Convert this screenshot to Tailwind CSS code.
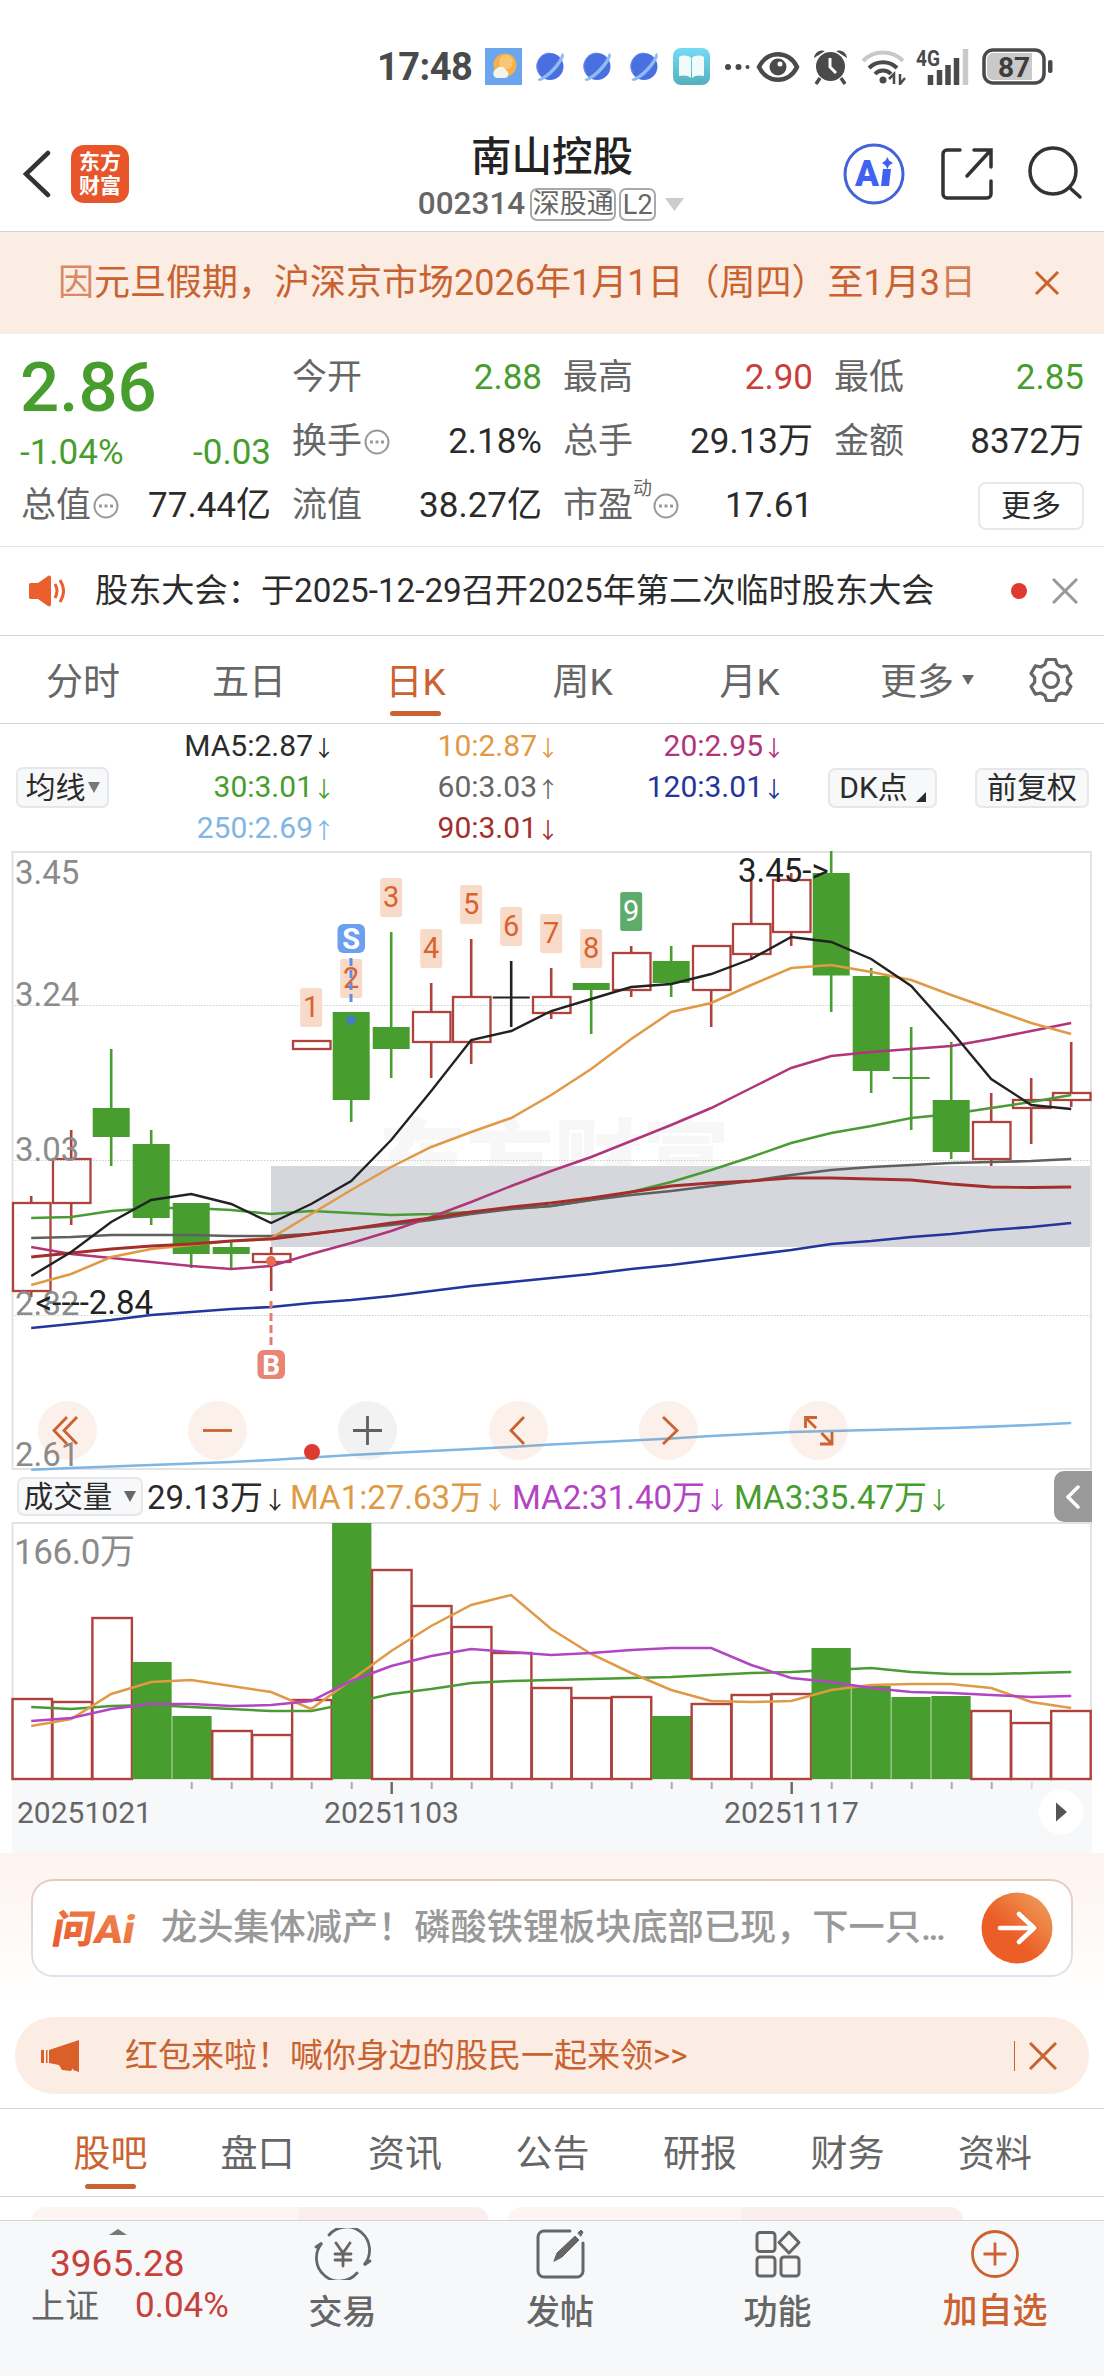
<!DOCTYPE html>
<html lang="zh-CN">
<head>
    <meta charset="UTF-8">
    <meta name="viewport" content="width=device-width, initial-scale=1.0">
    <title>南山控股 002314</title>
    <script src="https://cdn.jsdelivr.net/npm/@tailwindcss/browser@4"></script>
</head>
<body class="w-[1104px] h-[2376px] overflow-hidden bg-white text-[#2b2b2b] font-[Roboto,'Noto_Sans_CJK_SC',sans-serif]">

    <!-- Status bar -->
    <div class="flex items-center h-[116px] pt-[17px] pl-[377px] text-[#4a4a4a]">
        <span class="w-[108px] text-[38px] font-bold leading-[48px] tracking-[-0.5px]">17:48</span>
        <svg class="w-[37px] h-[37px]" viewBox="0 0 37 37">
            <rect width="37" height="37" fill="#6aa5ee"/>
            <circle cx="20" cy="17" r="11.5" fill="#f6b04a"/>
            <circle cx="21" cy="14" r="7" fill="#fbd08a" opacity=".7"/>
            <path d="M11 30a5 5 0 0 1 0-9 6 6 0 0 1 10 1 4.500 4.500 0 0 1 0 8z" fill="#f4f3ee"/>
        </svg>
        <svg class="ml-[13px] w-[124px] h-[37px]" viewBox="0 0 124 37">
            <g id="planet">
                <circle cx="15" cy="18.500" r="13.500" fill="#4a6fe0"/>
                <path d="M3 31C12 27 24 15 27 5c3 1 2 4 0 8C22 22 12 31 5 33c-2 0-3-1-2-2z" fill="#8cbcf3"/>
                <path d="M4 25A13 13 0 0 1 15 5" stroke="#6f92ee" stroke-width="1" fill="none"/>
            </g>
            <use href="#planet" x="47"/>
            <use href="#planet" x="94"/>
        </svg>
        <svg class="ml-[14px] w-[37px] h-[37px]" viewBox="0 0 37 37">
            <defs><linearGradient id="book" x1="0" y1="0" x2="0" y2="1"><stop offset="0" stop-color="#74dbf5"/><stop offset="1" stop-color="#55b0bd"/></linearGradient></defs>
            <rect width="37" height="37" rx="8" fill="url(#book)"/>
            <path d="M6 9c4-2 9-2 12 1v20c-3-3-8-3-12-2zM31 9c-4-2-9-2-12 1v20c3-3 8-3 12-2z" fill="#f2fbfc"/>
        </svg>
        <svg class="ml-[14px] w-[28px] h-[10px]" viewBox="0 0 28 10" fill="#4a4a4a">
            <circle cx="4" cy="5" r="3"/><circle cx="14.500" cy="5" r="3"/><circle cx="23.500" cy="5" r="2"/>
        </svg>
        <svg class="ml-[4px] w-[44px] h-[34px]" viewBox="0 0 44 34" fill="none">
            <path d="M3 17C11 0 33 0 41 17 33 34 11 34 3 17z" stroke="#4a4a4a" stroke-width="4.500"/>
            <circle cx="22" cy="17" r="8.500" fill="#4a4a4a"/><circle cx="24" cy="14" r="2.500" fill="#fff"/>
        </svg>
        <svg class="ml-[12px] w-[37px] h-[37px]" viewBox="0 0 37 37">
            <path d="M2 10a8 8 0 0 1 11-7zM35 10a8 8 0 0 0-11-7z" fill="#4a4a4a"/>
            <circle cx="18.500" cy="18.500" r="14.500" fill="#4a4a4a"/>
            <path d="M8 30l-4 6M29 30l4 6" stroke="#4a4a4a" stroke-width="3.500"/>
            <path d="M18 10v9l6 6" stroke="#fff" stroke-width="3" fill="none"/>
        </svg>
        <svg class="ml-[12px] w-[46px] h-[37px]" viewBox="0 0 46 37" fill="none" stroke-width="4">
            <path d="M2 13a28 28 0 0 1 40 0" stroke="#c9c9c9"/>
            <path d="M8 20a20 20 0 0 1 28 0" stroke="#4a4a4a"/>
            <path d="M14 26a11 11 0 0 1 16 0" stroke="#4a4a4a"/>
            <circle cx="22" cy="32" r="3.500" fill="#4a4a4a"/>
            <path d="M33 36V26l-5 5M39 26v10l5-6" stroke="#4a4a4a" stroke-width="2.500"/>
        </svg>
        <svg class="ml-[8px] w-[56px] h-[38px]" viewBox="0 0 56 38">
            <text x="1" y="18" font-size="22" font-weight="700" textLength="24" lengthAdjust="spacingAndGlyphs" fill="#4a4a4a">4G</text>
            <g stroke="#4a4a4a" stroke-width="5.500">
                <path d="M15.500 27v10M24.500 22v15M33 17v20M41.500 10v27"/><path d="M50.500 1v36" stroke="#c9c9c9"/>
            </g>
        </svg>
        <svg class="ml-[11px] w-[74px] h-[38px]" viewBox="0 0 74 38">
            <rect x="2" y="2" width="60" height="33" rx="9" fill="none" stroke="#4a4a4a" stroke-width="3.500"/>
            <path d="M11 5h39v27H11a6 6 0 0 1-6-6V11a6 6 0 0 1 6-6z" fill="#c9c9c9"/>
            <rect x="66" y="12" width="4.500" height="13" rx="2" fill="#4a4a4a"/>
            <text x="32" y="28.500" font-size="28" font-weight="700" text-anchor="middle" fill="#3d3d3d">87</text>
        </svg>
    </div>

    <!-- Title bar -->
    <header class="grid grid-cols-[380px_1fr_380px] h-[116px] border-b border-[#d2d2d4]">
        <div class="flex items-center pl-[22px]">
            <svg class="w-[30px] h-[48px]" viewBox="0 0 30 48" fill="none" stroke="#333" stroke-width="4.500" stroke-linecap="round"><path d="M26 3L4 24l22 21"/></svg>
            <div class="ml-[19px] w-[58px] h-[58px] rounded-[13px] bg-[#e8552b] text-white font-bold text-[21px] leading-[24px] text-center pt-[5px]">东方<br>财富</div>
        </div>
        <div class="flex flex-col items-center pt-[17px]">
            <h1 class="text-[40.500px] leading-[48px] font-medium text-[#222]">南山控股</h1>
            <div class="flex items-center h-[46px] text-[#666] leading-none -ml-[2px]">
                <span class="text-[31.500px] font-medium mr-[5px]">002314</span>
                <span class="border-2 border-[#a9a9a9] rounded-[7px] h-[33px] w-[86px] text-center text-[27px] leading-[28px] mr-[3px] whitespace-nowrap">深股通</span>
                <span class="border-2 border-[#a9a9a9] rounded-[7px] h-[33px] w-[37px] text-center text-[27px] leading-[30px]">L2</span>
                <svg class="ml-[9px] w-[19px] h-[13px]" viewBox="0 0 19 13"><path d="M0 0h19L9.500 13z" fill="#ccc"/></svg>
            </div>
        </div>
        <div class="flex items-center pl-[118px]">
            <svg class="w-[64px] h-[64px]" viewBox="0 0 64 64">
                <circle cx="32" cy="32" r="29" fill="none" stroke="#4363d8" stroke-width="3"/>
                <text x="13" y="44" font-size="36" font-weight="900" textLength="24" lengthAdjust="spacingAndGlyphs" fill="#4161f0">A</text>
                <path d="M41 27h8l-2 17h-8z" fill="#4161f0"/>
                <path d="M45.500 15l1.500 3.500 4 2.500-4 2.500-1.500 3.500-2-3.500-3.500-2.500 3.500-2.500z" fill="#4161f0"/>
            </svg>
            <svg class="ml-[34px] w-[54px] h-[54px]" viewBox="0 0 54 54" fill="none" stroke="#333" stroke-width="3.500" stroke-linecap="round">
                <path d="M20 3H7a4 4 0 0 0-4 4v40a4 4 0 0 0 4 4h40a4 4 0 0 0 4-4V34M34 3h17v17M50 4L27 29"/>
            </svg>
            <svg class="ml-[33px] w-[56px] h-[56px]" viewBox="0 0 56 56" fill="none" stroke="#333" stroke-width="3.500" stroke-linecap="round">
                <circle cx="26" cy="25" r="23"/><path d="M43 42l10 9"/>
            </svg>
        </div>
    </header>

    <!-- Holiday notice -->
    <div class="flex items-center h-[102px] bg-[#fbece4] pl-[58px] text-[#c8622f]">
        <p class="w-[924px] text-[36px] leading-[52px] whitespace-nowrap"><span class="opacity-70">因</span>元旦假期，沪深京市场2026年1月1日（周四）至1月3<span class="opacity-80">日</span></p>
        <svg class="ml-[52px] w-[26px] h-[26px]" viewBox="0 0 26 26" stroke="#c8622f" stroke-width="3"><path d="M2 2l22 22M24 2L2 24"/></svg>
    </div>

    <!-- Quote -->
    <section class="grid grid-cols-[250px_250px_250px_250px] gap-x-[21px] h-[213px] pt-[12px] pl-[21px] border-b border-[#e4e4e6] text-[35px] leading-[64px] whitespace-nowrap">
        <div class="h-[192px]">
            <div class="h-[84px] text-[69px] leading-[84px] font-medium text-[#479d2d] -ml-px">2.86</div>
            <div class="flex justify-between h-[44px] leading-[44px] mt-[1px] text-[#479d2d] -ml-px"><span>-1.04%</span><span>-0.03</span></div>
            <div class="flex items-center h-[64px] -mt-[1px]"><span class="text-[#666]">总值</span><svg class="ml-[2px] w-[26px] h-[26px]" viewBox="0 0 26 26"><g id="more-dots"><circle cx="13" cy="13" r="11.500" fill="none" stroke="#999" stroke-width="2"/><path d="M6 13h3M11.500 13h3M17 13h3" stroke="#999" stroke-width="3"/></g></svg><span class="ml-auto">77.44亿</span></div>
        </div>
        <div>
            <div class="flex justify-between"><span class="text-[#666]">今开</span><span class="text-[#479d2d]">2.88</span></div>
            <div class="flex items-center"><span class="text-[#666]">换手</span><svg class="ml-[2px] w-[26px] h-[26px]" viewBox="0 0 26 26"><use href="#more-dots"/></svg><span class="ml-auto">2.18%</span></div>
            <div class="flex justify-between"><span class="text-[#666]">流值</span><span>38.27亿</span></div>
        </div>
        <div>
            <div class="flex justify-between"><span class="text-[#666]">最高</span><span class="text-[#c8403a]">2.90</span></div>
            <div class="flex justify-between"><span class="text-[#666]">总手</span><span>29.13万</span></div>
            <div class="flex items-center"><span class="text-[#666]">市盈</span><span class="text-[#666] text-[19px] leading-none -mt-[36px]">动</span><svg class="ml-[1px] w-[26px] h-[26px]" viewBox="0 0 26 26"><use href="#more-dots"/></svg><span class="ml-auto">17.61</span></div>
        </div>
        <div>
            <div class="flex justify-between"><span class="text-[#666]">最低</span><span class="text-[#479d2d]">2.85</span></div>
            <div class="flex justify-between"><span class="text-[#666]">金额</span><span>8372万</span></div>
            <div class="flex justify-end items-center h-[64px]"><span class="w-[106px] h-[48px] border-2 border-[#e8e8ea] rounded-[8px] text-center text-[30px] leading-[43px] -mt-px">更多</span></div>
        </div>
    </section>

    <!-- Announcement -->
    <div class="flex items-center h-[89px] border-b border-[#d2d2d4] pl-[28px]">
        <svg class="w-[40px] h-[34px]" viewBox="0 0 40 34"><path d="M3 9h7L20 2c2-1 3 0 3 2v26c0 2-1 3-3 2l-10-7H3c-2 0-2-1-2-2V11c0-1 0-2 2-2z" fill="#ea5f2d"/><path d="M27 10q4 7 0 14M32 6q7 11 0 22" fill="none" stroke="#ea5f2d" stroke-width="3"/></svg>
        <p class="ml-[27px] w-[916px] text-[33.200px] leading-[48px] whitespace-nowrap">股东大会：于2025-12-29召开2025年第二次临时股东大会</p>
        <span class="w-[16px] h-[16px] rounded-full bg-[#de3a31]"></span>
        <svg class="ml-[25px] w-[26px] h-[26px]" viewBox="0 0 26 26" stroke="#999" stroke-width="3"><path d="M1 1l24 24M25 1L1 25"/></svg>
    </div>

    <!-- Period tabs -->
    <nav class="flex h-[88px] border-b border-[#d2d2d4] text-[37px] leading-[93px] text-[#666] text-center">
        <span class="w-[166px]">分时</span>
        <span class="w-[166px]">五日</span>
        <span class="w-[167px] flex flex-col items-center text-[#cb6230]">日K<i class="w-[51px] h-[5px] rounded-full bg-[#cb6230] -mt-[18px]"></i></span>
        <span class="w-[167px]">周K</span>
        <span class="w-[167px]">月K</span>
        <span class="w-[188px] flex h-[93px] items-center justify-center gap-[8px]">更多<svg class="w-[12px] h-[10px] -mt-[6px]" viewBox="0 0 13 11"><path d="M0 0h13L6.500 11z" fill="#666"/></svg></span>
        <svg class="mt-[21px] ml-[7px] w-[46px] h-[46px]" viewBox="0 0 46 46" fill="none" stroke="#666" stroke-width="3.200" stroke-linejoin="round">
            <path d="M18.600 2.500H27.400L29.200 7.700 33.200 10 38.600 8.900 43 16.500 39.300 20.700V25.300L43 29.500 38.600 37.100 33.200 36 29.200 38.300 27.400 43.500H18.600L16.800 38.300 12.800 36 7.400 37.100 3 29.500 6.700 25.300V20.700L3 16.500 7.400 8.900 12.800 10 16.800 7.700Z"/><circle cx="23" cy="23" r="7.500"/>
        </svg>
    </nav>

    <!-- Moving averages -->
    <div class="flex items-center h-[127px] pl-[16px] text-[30px]">
        <div class="flex items-center justify-center gap-[2px] w-[93px] h-[41px] bg-[#f7f8fa] border-2 border-[#e6e7ea] rounded-[7px] leading-[36px]">均线<svg class="w-[12px] h-[11px]" viewBox="0 0 12 11"><path d="M0 0h12L6 11z" fill="#777"/></svg></div>
        <div class="grid grid-cols-[221px_224px_226px] grid-rows-[41px_41px_41px] leading-[41px] h-[123px] -mt-[3px] text-right">
            <span>MA5:2.87<i class="not-italic inline-block w-[17px] text-center text-[22px] leading-none">↓</i></span>
            <span class="text-[#e09a45]">10:2.87<i class="not-italic inline-block w-[17px] text-center text-[22px] leading-none">↓</i></span>
            <span class="text-[#b0357a]">20:2.95<i class="not-italic inline-block w-[17px] text-center text-[22px] leading-none">↓</i></span>
            <span class="text-[#479d2d]">30:3.01<i class="not-italic inline-block w-[17px] text-center text-[22px] leading-none">↓</i></span>
            <span class="text-[#666]">60:3.03<i class="not-italic inline-block w-[17px] text-center text-[22px] leading-none">↑</i></span>
            <span class="text-[#22369b]">120:3.01<i class="not-italic inline-block w-[17px] text-center text-[22px] leading-none">↓</i></span>
            <span class="text-[#7fb6e4]">250:2.69<i class="not-italic inline-block w-[17px] text-center text-[22px] leading-none">↑</i></span>
            <span class="text-[#a32f2c]">90:3.01<i class="not-italic inline-block w-[17px] text-center text-[22px] leading-none">↓</i></span>
        </div>
        <div class="flex items-end justify-center gap-[8px] ml-[48px] w-[109px] h-[40px] bg-[#f7f8fa] border-2 border-[#e6e7ea] rounded-[7px] leading-[36px]">DK点<svg class="w-[10px] h-[10px] mb-[4px]" viewBox="0 0 10 10"><path d="M10 0v10H0z" fill="#2b2b2b"/></svg></div>
        <div class="ml-[38px] w-[114px] h-[40px] bg-[#f7f8fa] border-2 border-[#e6e7ea] rounded-[7px] leading-[35px] text-center">前复权</div>
    </div>

    <!-- K-line chart -->
    <svg id="kline" class="block w-[1104px] h-[620px]" viewBox="0 851 1104 620" fill="none"></svg>

    <!-- Volume header -->
    <div class="flex items-center h-[51px] pl-[17px] text-[33px] leading-[48px] whitespace-nowrap">
        <div class="flex items-center justify-center gap-[12px] w-[126px] h-[39px] mr-[4px] bg-[#f7f8fa] border-2 border-[#e6e7ea] rounded-[7px] text-[29.500px] leading-[34px]">成交量<svg class="w-[12px] h-[11px]" viewBox="0 0 12 11"><path d="M0 0h12L6 11z" fill="#666"/></svg></div>
        <div class="flex pt-[3px]">
            <span class="w-[143px]">29.13万<i class="not-italic inline-block w-[18px] text-center text-[24px] leading-none">↓</i></span>
            <span class="w-[222px] text-[#e09a45]">MA1:27.63万<i class="not-italic inline-block w-[18px] text-center text-[24px] leading-none">↓</i></span>
            <span class="w-[222px] text-[#b345c4]">MA2:31.40万<i class="not-italic inline-block w-[18px] text-center text-[24px] leading-none">↓</i></span>
            <span class="text-[#479d2d]">MA3:35.47万<i class="not-italic inline-block w-[18px] text-center text-[24px] leading-none">↓</i></span>
        </div>
        <div class="ml-auto mr-[12px] w-[38px] h-[51px] bg-[#999] rounded-l-[10px] flex items-center justify-center"><svg class="w-[14px] h-[24px]" viewBox="0 0 14 24" fill="none" stroke="#fff" stroke-width="3.500" stroke-linecap="round"><path d="M12 2L2 12l10 10"/></svg></div>
    </div>

    <!-- Volume chart with date axis -->
    <svg id="volume" class="block w-[1104px] h-[331px]" viewBox="0 1522 1104 331" fill="none"></svg>

    <!-- AI question -->
    <div class="h-[150px] pt-[26px] px-[31px] bg-linear-to-b from-[#fdf3ef] to-white">
        <div class="h-[98px] p-[2px] rounded-[22px] bg-linear-to-b from-[#e8c9c1] to-[#dfe2ef]">
            <div class="flex items-center h-full rounded-[20px] bg-white pl-[15px]">
                <svg class="w-[88px] h-[44px]" viewBox="0 0 88 44">
                    <defs><linearGradient id="ask" x1="0" y1="1" x2="1" y2="0"><stop offset="0" stop-color="#e9532a"/><stop offset="1" stop-color="#f08d52"/></linearGradient></defs>
                    <text x="9" y="37" font-size="39" font-weight="900" textLength="82" lengthAdjust="spacingAndGlyphs" transform="skewX(-10)" fill="url(#ask)">问Ai</text>
                </svg>
                <p class="ml-[25px] w-[820px] text-[36.200px] leading-[56px] whitespace-nowrap text-[#999] font-medium">龙头集体减产！磷酸铁锂板块底部已现，下一只<span class="tracking-[-2.500px]">...</span></p>
                <svg class="w-[72px] h-[72px]" viewBox="0 0 72 72">
                    <defs><linearGradient id="go" x1=".2" y1=".8" x2=".9" y2=".1"><stop offset=".3" stop-color="#ec5e28"/><stop offset="1" stop-color="#ee9a55"/></linearGradient></defs>
                    <circle cx="36" cy="36" r="35.500" fill="url(#go)"/>
                    <path d="M19 36h34M38 22l15 14-15 14" fill="none" stroke="#fff" stroke-width="4.500" stroke-linecap="round" stroke-linejoin="round"/>
                </svg>
            </div>
        </div>
    </div>

    <!-- Red packet banner -->
    <div class="h-[106px] pt-[14px] px-[15px] border-b border-[#d2d2d4]">
        <div class="flex items-center h-[77px] rounded-full bg-[#fbece4] pl-[26px] text-[#c8622f]">
            <svg class="w-[40px] h-[34px]" viewBox="0 0 40 34" fill="#da5f28"><path d="M0 11h3v13H0zM5 11h1.500v13H5zM8 11L38 1v32l-6-2v-2l-2 3-9-1-3-5-10-2z"/></svg>
            <p class="ml-[44px] w-[889px] text-[33px] leading-[48px] whitespace-nowrap">红包来啦！喊你身边的股民一起来领&gt;&gt;</p>
            <i class="w-[1px] h-[30px] bg-[#c8622f]"></i>
            <svg class="ml-[14px] w-[28px] h-[28px]" viewBox="0 0 28 28" stroke="#c8622f" stroke-width="3"><path d="M1 1l26 26M27 1L1 27"/></svg>
        </div>
    </div>

    <!-- Content tabs -->
    <nav class="flex h-[88px] pl-[37px] border-b border-[#d2d2d4] text-[37px] leading-[92px] text-[#666] text-center">
        <span class="w-[147px] flex flex-col items-center text-[#cb6230]">股吧<i class="w-[51px] h-[5px] rounded-full bg-[#cb6230] -mt-[17px]"></i></span>
        <span class="w-[147px]">盘口</span>
        <span class="w-[148px]">资讯</span>
        <span class="w-[147px]">公告</span>
        <span class="w-[148px]">研报</span>
        <span class="w-[147px]">财务</span>
        <span class="w-[148px]">资料</span>
    </nav>

    <div class="flex gap-[20px] h-[23px] pt-[10px] pl-[32px]">
        <div class="w-[456px] h-[13px] rounded-t-[20px] overflow-hidden flex bg-[#fdf5f3]"><div class="ml-auto w-[190px] bg-[#faefed]"></div></div>
        <div class="w-[455px] h-[13px] rounded-t-[20px] overflow-hidden flex bg-[#fdf5f3]"><div class="ml-auto w-[221px] bg-[#faefed]"></div></div>
    </div>

    <!-- Bottom bar -->
    <footer class="flex h-[156px] bg-[#f7f8fa] border-t border-[#d2d3d6] text-[34px] font-medium text-[#666]">
        <div class="w-[234px] font-normal">
            <svg class="ml-[109px] mt-[8px] w-[18px] h-[6px]" viewBox="0 0 18 6"><path d="M9 0l9 6H0z" fill="#777"/></svg>
            <div class="pl-[50px] mt-[7px] text-[37px] leading-[44px] text-[#c8403a]">3965.28</div>
            <div class="flex pl-[31px] leading-[40px]"><span class="w-[104px]">上证</span><span class="text-[35px] text-[#c8403a]">0.04%</span></div>
        </div>
        <div class="w-[217px] flex flex-col items-center pt-[7px]">
            <svg class="w-[60px] h-[52px]" viewBox="0 0 60 52" fill="none" stroke="#666" stroke-width="2.800" stroke-linecap="round">
                <path d="M16 7A23 23 0 0 1 51 37l6-4M44 45A23 23 0 0 1 9 15l-6 4M23 15l7 10 7-10M30 25v13M22 26h16M22 32h16"/>
            </svg>
            <span class="leading-[50px] mt-[7px]">交易</span>
        </div>
        <div class="w-[218px] flex flex-col items-center pt-[7px]">
            <svg class="w-[52px] h-[52px]" viewBox="0 0 52 52" fill="none" stroke="#666" stroke-width="3" stroke-linecap="round">
                <path d="M36 3H10a6 6 0 0 0-6 6v34a6 6 0 0 0 6 6h33a6 6 0 0 0 6-6V15"/><path d="M20 33l3-8L41 8l4 4-17 17zM44 5l3-3 2 2-2 4z" fill="#666" stroke-width="1"/>
            </svg>
            <span class="leading-[50px] mt-[7px]">发帖</span>
        </div>
        <div class="w-[217px] flex flex-col items-center pt-[7px]">
            <svg class="w-[52px] h-[52px]" viewBox="0 0 52 52" fill="none" stroke="#666" stroke-width="3" stroke-linejoin="round">
                <rect x="5" y="4.500" width="18" height="19" rx="3"/><rect x="5" y="29" width="18" height="19" rx="3"/><rect x="29" y="29" width="18" height="19" rx="3"/><path d="M37 4l10 10.500L37 25 27 14.500z"/>
            </svg>
            <span class="leading-[50px] mt-[7px]">功能</span>
        </div>
        <div class="w-[218px] flex flex-col items-center pt-[7px] text-[#cb6230]">
            <svg class="w-[52px] h-[52px]" viewBox="0 0 52 52" fill="none" stroke="#cb6230" stroke-width="2.800"><circle cx="26" cy="26" r="22.500"/><path d="M26 14.500v23M14.500 26h23"/></svg>
            <span class="text-[35px] leading-[50px] mt-[7px]">加自选</span>
        </div>
    </footer>

    <script>
        const GREEN = '#479d2d';
        const RED = '#ae423c';
        const cx = i => 31.2 + 40 * i;

        function polyline(values, color, width) {
            const pts = values.map((v, i) => `${cx(i)},${v}`).join(' ');
            return `<polyline points="${pts}" stroke="${color}" stroke-width="${width}"/>`;
        }

        // [type, body top, body bottom, high, low]
        const candles = [
            ['r', 1203, 1291, 1196, 1297], ['r', 1159, 1203, 1130, 1225], ['g', 1108, 1137, 1049, 1166],
            ['g', 1144, 1218, 1130, 1225], ['g', 1203, 1254, 1203, 1268], ['g', 1247, 1254, 1242, 1268],
            ['r', 1254, 1262, 1247, 1291], ['r', 1041, 1049, 1041, 1049], ['g', 1012, 1100, 1012, 1122],
            ['g', 1027, 1049, 932, 1078], ['r', 1012, 1042, 983, 1078], ['r', 997, 1042, 939, 1064],
            ['k', 996.5, 998.5, 961, 1027], ['r', 997, 1013, 968, 1019], ['g', 983, 990, 983, 1034],
            ['r', 953, 990, 946, 997], ['g', 961, 983, 946, 997], ['r', 946, 990, 946, 1027],
            ['r', 924, 954, 880, 960], ['r', 880, 932, 873, 946], ['g', 873, 975.5, 851, 1012],
            ['g', 976, 1071, 968, 1093], ['g', 1077, 1079, 1027, 1130], ['g', 1100, 1152, 1042, 1159],
            ['r', 1122, 1159, 1093, 1166], ['r', 1100, 1108, 1078, 1144], ['r', 1093, 1100, 1042, 1107]
        ];

        const ma = {
            250: [1469.7, 1468, 1466.5, 1465, 1463.5, 1462, 1460, 1457.5, 1455, 1453, 1451, 1449, 1447, 1444.5, 1442.5, 1440.5, 1438.5, 1436, 1434, 1432, 1431, 1430, 1429, 1428, 1426.6, 1425, 1423],
            120: [1328, 1324, 1320, 1315, 1312, 1309, 1307, 1303, 1300, 1296, 1291, 1286, 1282, 1278, 1274, 1269, 1265, 1260, 1255, 1250, 1244, 1241, 1237, 1234, 1230, 1227, 1223],
            30: [1218, 1217, 1211, 1208, 1208, 1210, 1214, 1211, 1213, 1215, 1214, 1212, 1209, 1206, 1200, 1192, 1182, 1170, 1157, 1143, 1133, 1126, 1118, 1114, 1108, 1102, 1095],
            60: [1238, 1237, 1235, 1235, 1235, 1236, 1236, 1234, 1229, 1225, 1220, 1214, 1209, 1206, 1200, 1195, 1191, 1186, 1181, 1175, 1170, 1167, 1165, 1163, 1162, 1161, 1159],
            20: [1247, 1254, 1258, 1262, 1266, 1269, 1266, 1254, 1243, 1231, 1217, 1202, 1186, 1171, 1157, 1141, 1125, 1108, 1088, 1068, 1056, 1052, 1049, 1046, 1039, 1031, 1023],
            10: [1285, 1274, 1257, 1249, 1245, 1241, 1238, 1214, 1190, 1167, 1147, 1132, 1118, 1095, 1069, 1039, 1012, 1003, 985, 968, 965, 972, 980, 995, 1009, 1023, 1034],
            90: [1257, 1253, 1249, 1246, 1244, 1241, 1239, 1234, 1229, 1223, 1218, 1212, 1207, 1203, 1198, 1192, 1186, 1183, 1181, 1178, 1178, 1179, 1180, 1184, 1187, 1187.5, 1187],
            5: [1276, 1252, 1222, 1200, 1194, 1204, 1223, 1204, 1181, 1140, 1091, 1040, 1031, 1011, 999, 987, 984, 974, 959, 937, 942, 959, 986, 1031, 1079, 1105, 1109]
        };

        function drawKline() {
            let s = '';
            s += `<text x="378" y="1192" font-size="88" font-weight="900" fill="#f7f7f8">东方财富</text>`;
            s += `<path d="M12 1005.5H1091M12 1160.5H1091M12 1315.5H1091" stroke="#cfcfcf" stroke-dasharray="1.500 1.500"/>`;
            s += `<rect x="271" y="1166" width="820" height="81" fill="#d6d7dd"/>`;
            s += `<path d="M12.500 852V1469H1091V852Z" stroke="#e3e3e4" stroke-width="2"/>`;

            candles.forEach(([t, top, bot, hi, lo], i) => {
                const x = cx(i);
                if (t === 'r') {
                    s += `<path d="M${x} ${hi}V${top}M${x} ${bot}V${lo}" stroke="${RED}" stroke-width="2.600"/>`;
                    s += `<rect x="${x - 18.2}" y="${top}" width="37.500" height="${bot - top}" stroke="${RED}" stroke-width="2.300"/>`;
                } else {
                    const c = t === 'g' ? GREEN : '#222';
                    s += `<path d="M${x} ${hi}V${lo}" stroke="${c}" stroke-width="2.600"/>`;
                    s += `<rect x="${x - 18.5}" y="${top}" width="37" height="${bot - top}" fill="${c}"/>`;
                }
            });

            s += polyline(ma[250], '#7fb6e4', 2.6);
            s += polyline(ma[120], '#22369b', 2.6);
            s += polyline(ma[30], '#4a9a36', 2.5);
            s += polyline(ma[60], '#606060', 2.6);
            s += polyline(ma[20], '#b0357a', 2.5);
            s += polyline(ma[10], '#e09a45', 2.5);
            s += polyline(ma[90], '#a32f2c', 2.8);
            s += polyline(ma[5], '#222', 2.4);

            // price scale
            [['3.45', 884], ['3.24', 1006], ['3.03', 1161], ['2.82', 1315], ['2.61', 1466]].forEach(([t, y]) => {
                s += `<text x="15" y="${y}" font-size="33" fill="#8b8b8b">${t}</text>`;
            });
            s += `<text x="738" y="882" font-size="33" fill="#222">3.45-&gt;</text>`;
            s += `<text x="35.500" y="1314" font-size="33" fill="#222">&lt;----2.84</text>`;

            // nine-turn counters
            [988, 959, 878, 929, 885, 907, 914, 929, 892].forEach((y, n) => {
                const x = cx(n + 7);
                const last = n === 8;
                s += `<rect x="${x - 11}" y="${y}" width="22" height="39" rx="2.500" fill="${last ? '#5fab6b' : '#f8dac9'}"/>`;
                s += `<text x="${x}" y="${y + 29}" font-size="29" text-anchor="middle" fill="${last ? '#fff' : '#d9622f'}">${n + 1}</text>`;
            });

            // sell / buy marks
            s += `<rect x="337.500" y="924" width="27.500" height="29" rx="6" fill="#6c9ff0"/><text x="351.200" y="948.500" font-size="29" font-weight="700" text-anchor="middle" fill="#fff">S</text>`;
            s += `<path d="M351 958V1003" stroke="#5f8fe4" stroke-width="3" stroke-dasharray="8 4"/><circle cx="351" cy="1020" r="5" fill="#4480b8"/>`;
            s += `<rect x="257.500" y="1350" width="27.500" height="29" rx="6" fill="#e98574"/><text x="271.200" y="1374.500" font-size="28" font-weight="700" text-anchor="middle" fill="#fff">B</text>`;
            s += `<path d="M271 1301V1345" stroke="#de7e70" stroke-width="3" stroke-dasharray="8 4"/><circle cx="271" cy="1261" r="5" fill="#ea6b50"/>`;

            // toolbar buttons
            const icons = [
                [67.5, 'M67 1417L54 1430.500L67 1444M77 1417L64 1430.500L77 1444'],
                [217.5, 'M203 1430.500H232'],
                [367.5, 'M353 1430.500H382M367.500 1416V1445'],
                [518.5, 'M524 1417L511 1430.500L524 1444'],
                [668.4, 'M663 1417L677 1430.500L663 1444'],
                [818.4, 'M805.500 1428V1417.500H817M806 1418L816 1428M820 1444H832V1432M831 1443L821.500 1433']
            ];
            icons.forEach(([x, d], i) => {
                const gray = i === 2;
                s += `<circle cx="${x}" cy="1430.500" r="29.500" fill="${gray ? '#888' : '#e07a45'}" fill-opacity=".11"/>`;
                s += `<path d="${d}" stroke="${gray ? '#606060' : '#cb6230'}" stroke-width="2.800"/>`;
            });
            s += `<circle cx="312" cy="1452" r="8" fill="#de3a31"/>`;
            document.getElementById('kline').innerHTML = s;
        }

        const volumes = [
            ['r', 1699], ['r', 1702], ['r', 1618], ['g', 1662], ['g', 1716], ['r', 1731], ['r', 1735], ['r', 1700], ['g', 1523],
            ['r', 1570], ['r', 1606], ['r', 1627], ['r', 1653], ['r', 1688], ['r', 1698], ['r', 1697], ['g', 1716], ['r', 1704],
            ['r', 1695], ['r', 1694], ['g', 1648], ['g', 1686], ['g', 1697], ['g', 1696], ['r', 1711], ['r', 1723], ['r', 1711]
        ];
        const vma1 = [1726, 1719, 1694, 1682, 1680, 1686, 1692, 1709, 1680, 1651, 1626, 1605, 1595, 1629, 1654, 1673, 1690, 1701, 1702, 1701, 1690, 1685, 1684, 1684, 1688, 1702, 1708];
        const vma2 = [1721, 1718, 1709, 1704, 1704, 1706, 1705, 1701, 1681, 1666, 1656, 1649, 1652, 1655, 1653, 1650, 1648, 1648, 1665, 1678, 1682, 1688, 1692, 1693, 1695, 1697, 1696];
        const vma3 = [1707, 1709, 1706, 1705, 1707, 1709, 1711, 1711, 1703, 1694, 1689, 1683, 1681, 1680, 1679, 1678, 1677, 1675, 1673, 1672, 1670, 1668, 1672, 1674, 1674, 1673, 1672];

        function drawVolume() {
            let s = `<rect x="12" y="1780" width="1080" height="73" fill="#f7f8fa"/>`;
            s += `<path d="M12.500 1523V1779H1091V1523Z" stroke="#e3e3e4" stroke-width="2"/>`;
            s += `<text x="14" y="1564" font-size="35" textLength="121" fill="#8b8b8b">166.0万</text>`;
            volumes.forEach(([t, y], i) => {
                const x = 12.5 + 39.95 * i;
                s += t === 'g'
                    ? `<rect x="${x}" y="${y}" width="39.300" height="${1779 - y}" fill="${GREEN}"/>`
                    : `<rect x="${x}" y="${y}" width="39.500" height="${1779 - y}" stroke="${RED}" stroke-width="2.400"/>`;
            });
            s += polyline(vma3, '#4a9a36', 2.5);
            s += polyline(vma1, '#e09a45', 2.5);
            s += polyline(vma2, '#b345c4', 2.5);
            for (let i = 4; i < 26; i++) {
                const big = i === 9 || i === 19;
                s += `<path d="M${cx(i) + 0.5} 1782V${big ? 1794 : 1789}" stroke="${i === 25 ? '#ddd' : big ? '#666' : '#aaa'}" stroke-width="${big ? 2.4 : 2}"/>`;
            }
            s += `<text x="17" y="1823" font-size="30" fill="#666">20251021</text>`;
            s += `<text x="391.500" y="1823" font-size="30" text-anchor="middle" fill="#666">20251103</text>`;
            s += `<text x="791.500" y="1823" font-size="30" text-anchor="middle" fill="#666">20251117</text>`;
            s += `<circle cx="1061" cy="1812" r="22.500" fill="#fff"/><path d="M1056 1802.500V1821.500L1067 1812Z" fill="#555"/>`;
            document.getElementById('volume').innerHTML = s;
        }

        drawKline();
        drawVolume();
    </script>
</body>
</html>
